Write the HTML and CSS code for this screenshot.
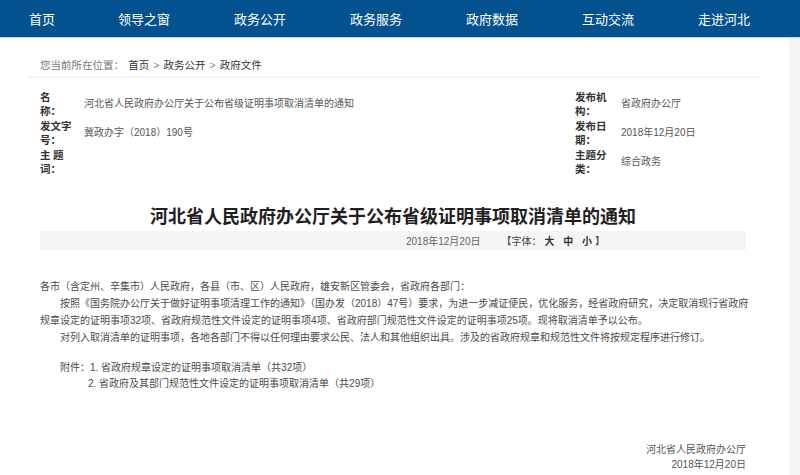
FILE: index.html
```html
<!DOCTYPE html>
<html lang="zh-CN">
<head>
<meta charset="utf-8">
<title>河北省人民政府办公厅关于公布省级证明事项取消清单的通知</title>
<link rel="stylesheet" href="styles.css">
</head>
<body>
<header class="nav">
  <ul class="nav-list">
    <li>首页</li>
    <li>领导之窗</li>
    <li>政务公开</li>
    <li>政务服务</li>
    <li>政府数据</li>
    <li>互动交流</li>
    <li>走进河北</li>
  </ul>
</header>
<div class="page">
  <main class="main">
    <div class="crumb">
      <span class="crumb-label">您当前所在位置：</span>
      <span class="crumb-link">首页</span><span class="crumb-sep">&gt;</span><span class="crumb-link">政务公开</span><span class="crumb-sep">&gt;</span><span class="crumb-link">政府文件</span>
    </div>
    <div class="rule"></div>
    <div class="meta">
      <div class="m-label">名&nbsp;&nbsp;&nbsp;&nbsp; 称：</div>
      <div class="m-value">河北省人民政府办公厅关于公布省级证明事项取消清单的通知</div>
      <div class="m-label">发布机构：</div>
      <div class="m-value">省政府办公厅</div>
      <div class="m-label">发文字号：</div>
      <div class="m-value">冀政办字（2018）190号</div>
      <div class="m-label">发布日期：</div>
      <div class="m-value">2018年12月20日</div>
      <div class="m-label">主 题 词：</div>
      <div class="m-value"></div>
      <div class="m-label">主题分类：</div>
      <div class="m-value">综合政务</div>
    </div>
    <h1 class="title">河北省人民政府办公厅关于公布省级证明事项取消清单的通知</h1>
    <div class="datebar">
      <span class="date">2018年12月20日</span>
      <span class="fontsize">【字体：<b>大</b> <b>中</b> <b>小</b>】</span>
    </div>
    <div class="content">
      <p class="noindent">各市（含定州、辛集市）人民政府，各县（市、区）人民政府，雄安新区管委会，省政府各部门：</p>
      <p>按照《国务院办公厅关于做好证明事项清理工作的通知》（国办发（2018）47号）要求，为进一步减证便民，优化服务，经省政府研究，决定取消现行省政府规章设定的证明事项32项、省政府规范性文件设定的证明事项4项、省政府部门规范性文件设定的证明事项25项。现将取消清单予以公布。</p>
      <p>对列入取消清单的证明事项，各地各部门不得以任何理由要求公民、法人和其他组织出具。涉及的省政府规章和规范性文件将按规定程序进行修订。</p>
      <div class="attach">
        <div>附件：1. 省政府规章设定的证明事项取消清单（共32项）</div>
        <div class="attach-2">2. 省政府及其部门规范性文件设定的证明事项取消清单（共29项）</div>
      </div>
    </div>
    <div class="sign">
      <div>河北省人民政府办公厅</div>
      <div>2018年12月20日</div>
    </div>
  </main>
  <aside class="side"></aside>
</div>
</body>
</html>
```

FILE: styles.css
```css
* { box-sizing: border-box; }
html, body { margin: 0; padding: 0; }
body {
  width: 800px;
  height: 475px;
  overflow: hidden;
  background: #fff;
  font-family: "Liberation Sans", "Noto Sans CJK SC", sans-serif;
  color: #333;
}
.nav {
  height: 38px;
  background: #03518f;
  border-bottom: 1px solid #c8d8e8;
}
.nav-list {
  list-style: none;
  margin: 0;
  padding: 0 0 0 29px;
  display: grid;
  grid-template-columns: 89px repeat(6, 116px);
  height: 37px;
  align-items: center;
}
.nav-list li {
  color: #fff;
  font-family: "Noto Sans CJK SC", sans-serif;
  font-size: 13px;
  line-height: 37px;
  white-space: nowrap;
}
.page {
  display: flex;
  height: 437px;
}
.main {
  flex: 1;
  padding: 0;
}
.side {
  width: 11px;
  background: #f4f4f4;
}
.crumb {
  padding: 19px 0 0 40px;
  height: 38px;
  font-size: 10.5px;
  line-height: 16px;
  font-family: "Noto Sans CJK SC", sans-serif;
}
.crumb-label { color: #777; margin-right: 2px; }
.crumb-link { color: #333; }
.crumb-sep { color: #888; margin: 0 4px; font-family: "Liberation Sans", sans-serif; }
.rule {
  margin-left: 27px;
  width: 732px;
  height: 2px;
  background: #f4f4f4;
}
.meta {
  margin-top: 11px;
  padding-left: 40px;
  display: grid;
  grid-template-columns: 44px 491px 46px 1fr;
  grid-auto-rows: 29px;
  align-items: center;
  font-size: 10.5px;
}
.m-label {
  width: 34px;
  line-height: 14px;
  font-weight: bold;
  color: #333;
  font-family: "Noto Sans CJK SC", sans-serif;
}
.m-value {
  color: #555;
  font-size: 10px;
  line-height: 14px;
}
.title {
  margin: 26px 0 0 40px;
  width: 706px;
  text-align: center;
  font-family: "Noto Sans CJK SC", sans-serif;
  font-size: 18px;
  font-weight: bold;
  line-height: 26px;
  color: #1f1f1f;
}
.datebar {
  margin: 3px 0 0 40px;
  width: 706px;
  height: 19px;
  background: #f5f5f5;
  padding-left: 366px;
  display: flex;
  align-items: center;
  font-size: 10px;
  color: #666;
}
.date { margin-right: 21px; }
.fontsize { color: #444; }
.fontsize b { font-weight: bold; color: #333; margin: 0 3px; }
.content {
  margin: 28px 0 0 40px;
  width: 716px;
  font-size: 10px;
  line-height: 17px;
  color: #4a4a4a;
}
.content p { margin: 0; text-indent: 20px; }
.content p.noindent { text-indent: 0; }
.attach {
  margin-top: 14px;
  padding-left: 20px;
  line-height: 16px;
}
.attach-2 { padding-left: 28px; }
.sign {
  margin: 50px 0 0 40px;
  width: 706px;
  text-align: right;
  font-size: 10px;
  line-height: 15px;
  color: #555;
}
```
